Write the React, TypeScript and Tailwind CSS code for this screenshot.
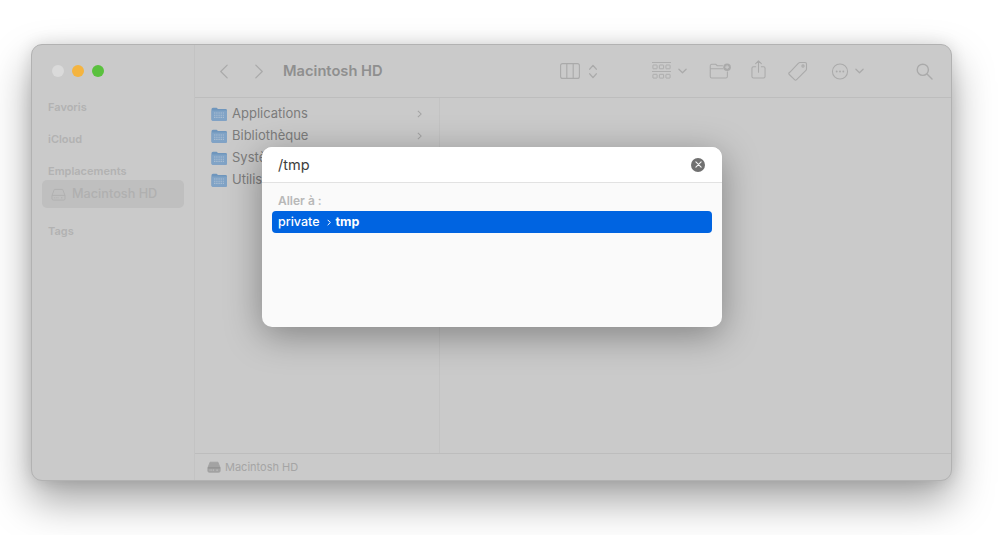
const font = "font-['Inter',_'Liberation_Sans',_sans-serif]";

function HardDisk({ className, filled }: { className?: string; filled?: boolean }) {
  return (
    <svg viewBox="0 0 16 14" className={className} fill="none" stroke="currentColor" strokeWidth="1">
      <path d="M3.5 1.500h9l2.500 6.500v3.500a1.500 1.500 0 0 1-1.500 1.500h-11A1.500 1.500 0 0 1 1 11.500V8z" fill={filled ? "#a3a3a3" : "none"} />
      <path d="M1 8h14" stroke={filled ? "#8a8a8a" : "currentColor"} />
      <circle cx="11.500" cy="10.500" r=".7" fill={filled ? "#d0d0d0" : "currentColor"} stroke="none" />
      <path d="M3 10.500h5" strokeDasharray="1 1" stroke={filled ? "#d0d0d0" : "currentColor"} />
    </svg>
  );
}

function FolderIcon() {
  return (
    <svg viewBox="0 0 16 14" className="h-[14px] w-[16px] shrink-0">
      <path d="M.5 2.200A1.500 1.500 0 0 1 2 .7h3.600l1.400 1.200h7.400A1.500 1.500 0 0 1 16 3.400v9a1.400 1.400 0 0 1-1.500 1.400H2A1.500 1.500 0 0 1 .5 12.400z" fill="#6f96bd" />
      <path d="M.5 3.600h15.500v8.800a1.400 1.400 0 0 1-1.500 1.400H2a1.500 1.500 0 0 1-1.500-1.400z" fill="#80a3c6" />
      <path d="M3 6h10M3 8.200h10M3 10.400h10" stroke="#a9bdd1" strokeWidth="1.100" strokeDasharray="1.400 .8" />
    </svg>
  );
}

function Toolbar() {
  return (
    <div className="flex h-[53px] shrink-0 items-center border-b border-[#bdbdbd] text-[#aaaaaa]">
      <svg viewBox="0 0 12 18" className="ml-[23px] h-[17px] w-[11px]" fill="none" stroke="currentColor" strokeWidth="1.400" strokeLinecap="round" strokeLinejoin="round">
        <path d="M10 2 3 9l7 7" />
      </svg>
      <svg viewBox="0 0 12 18" className="ml-[25px] h-[17px] w-[11px]" fill="none" stroke="currentColor" strokeWidth="1.400" strokeLinecap="round" strokeLinejoin="round">
        <path d="m2 2 7 7-7 7" />
      </svg>
      <span className="ml-[18px] w-[277px] text-[14.700px] leading-none font-semibold text-[#8f8f8f]">Macintosh HD</span>
      <svg viewBox="0 0 20 16" className="h-[16px] w-[20px]" fill="none" stroke="currentColor" strokeWidth="1.100">
        <rect x=".6" y=".6" width="18.800" height="14.800" rx="2" />
        <path d="M6.800.6v14.800M13.200.6v14.800" />
      </svg>
      <svg viewBox="0 0 10 16" className="ml-[8px] h-[15px] w-[10px]" fill="none" stroke="currentColor" strokeWidth="1.500" strokeLinecap="round" strokeLinejoin="round">
        <path d="m1.500 5.500 3.500-4 3.500 4M1.500 10.500l3.500 4 3.500-4" />
      </svg>
      <svg viewBox="0 0 19 17" className="ml-[54px] h-[17px] w-[19px] -translate-y-[1px]" fill="none" stroke="currentColor" strokeWidth=".9">
        <path d="M0 .5h19M0 9.500h19" />
        <rect x=".9" y="3" width="4.200" height="3.800" rx=".5" />
        <rect x="7.400" y="3" width="4.200" height="3.800" rx=".5" />
        <rect x="13.900" y="3" width="4.200" height="3.800" rx=".5" />
        <rect x=".9" y="12.300" width="4.200" height="3.800" rx=".5" />
        <rect x="7.400" y="12.300" width="4.200" height="3.800" rx=".5" />
        <rect x="13.900" y="12.300" width="4.200" height="3.800" rx=".5" />
      </svg>
      <svg viewBox="0 0 10 6" className="ml-[7px] h-[6px] w-[9px]" fill="none" stroke="currentColor" strokeWidth="1.400" strokeLinecap="round" strokeLinejoin="round">
        <path d="m1 1 4 4 4-4" />
      </svg>
      <svg viewBox="0 0 23 17" className="ml-[22px] h-[16px] w-[23px]" fill="none" stroke="currentColor" strokeWidth="1.100">
        <path d="M.6 3A1.600 1.600 0 0 1 2.200 1.400h4.300l1.500 1.500h6M.6 6h14M.6 3v11.400A1.600 1.600 0 0 0 2.200 16h15a1.600 1.600 0 0 0 1.600-1.600V9" />
        <circle cx="18.500" cy="4.400" r="4" fill="currentColor" stroke="none" />
        <path d="M18.500 2.400v4M16.500 4.400h4" stroke="#c9c9c9" strokeWidth="1.100" />
      </svg>
      <svg viewBox="0 0 15 20" className="ml-[19px] h-[19px] w-[15px] -translate-y-[2px]" fill="none" stroke="currentColor" strokeWidth="1.100" strokeLinecap="round" strokeLinejoin="round">
        <path d="M4.500 7H2.200A1.600 1.600 0 0 0 .6 8.600v8.800A1.600 1.600 0 0 0 2.200 19h10.600a1.600 1.600 0 0 0 1.600-1.600V8.600A1.600 1.600 0 0 0 12.800 7h-2.300M7.500 13V1M4.500 3.800 7.500.9l3 2.900" />
      </svg>
      <svg viewBox="0 0 20 20" className="ml-[22px] h-[20px] w-[20px]" fill="none" stroke="currentColor" strokeWidth="1.100" strokeLinejoin="round">
        <path d="M1.300 11.800 10.500 2.200A2 2 0 0 1 12 1.500h5a1.500 1.500 0 0 1 1.500 1.500v5a2 2 0 0 1-.6 1.400l-9.300 9.300a1.500 1.500 0 0 1-2.100 0l-5.200-5.200a1.500 1.500 0 0 1 0-2.100z" />
        <circle cx="15" cy="5" r="1.100" />
      </svg>
      <svg viewBox="0 0 18 18" className="ml-[23px] h-[17px] w-[18px]" fill="none" stroke="currentColor" strokeWidth="1.100">
        <circle cx="9" cy="9" r="8" />
        <circle cx="5.500" cy="9" r="1" fill="currentColor" stroke="none" />
        <circle cx="9" cy="9" r="1" fill="currentColor" stroke="none" />
        <circle cx="12.500" cy="9" r="1" fill="currentColor" stroke="none" />
      </svg>
      <svg viewBox="0 0 10 6" className="ml-[6px] h-[6px] w-[9px]" fill="none" stroke="currentColor" strokeWidth="1.400" strokeLinecap="round" strokeLinejoin="round">
        <path d="m1 1 4 4 4-4" />
      </svg>
      <svg viewBox="0 0 17 17" className="ml-[52px] h-[17px] w-[17px]" fill="none" stroke="currentColor" strokeWidth="1.400" strokeLinecap="round">
        <circle cx="6.800" cy="6.800" r="5.600" />
        <path d="m11 11 5 5" />
      </svg>
    </div>
  );
}

function Sidebar() {
  const heading = "px-[16px] text-[11px] leading-[13px] font-semibold text-[#b2b2b2]";
  return (
    <aside className="flex w-[163px] shrink-0 flex-col border-r border-[#c3c3c3]">
      <div className="mt-[20px] ml-[20px] flex gap-[8px]">
        <span className="h-[12px] w-[12px] rounded-full bg-[#dadada]" />
        <span className="h-[12px] w-[12px] rounded-full bg-[#f4b440]" />
        <span className="h-[12px] w-[12px] rounded-full bg-[#5ac13e]" />
      </div>
      <p className={`${heading} mt-[24px]`}>Favoris</p>
      <p className={`${heading} mt-[19px]`}>iCloud</p>
      <p className={`${heading} mt-[19px]`}>Emplacements</p>
      <div className="mx-[10px] mt-[2px] flex h-[28px] items-center rounded-[5px] bg-[#bfbfbf] px-[9px] text-[#b0b0b0]">
        <HardDisk className="h-[13px] w-[15px]" />
        <span className="ml-[6px] text-[12.700px] font-medium">Macintosh HD</span>
      </div>
      <p className={`${heading} mt-[17px]`}>Tags</p>
    </aside>
  );
}

function FileColumn() {
  const rows = ["Applications", "Bibliothèque", "Système", "Utilisateurs"];
  return (
    <div className="w-[245px] shrink-0 border-r border-[#c3c3c3] px-[16px] pt-[5px]">
      {rows.map((name, i) => (
        <div key={name} className="flex h-[22px] items-center gap-[5px]">
          <FolderIcon />
          <span className="text-[13px] text-[#7c7c7c]">{name}</span>
          {i < 2 && (
            <svg viewBox="0 0 6 10" className="mr-[1px] ml-auto h-[8px] w-[5px]" fill="none" stroke="#a3a3a3" strokeWidth="1.300">
              <path d="m1 1 4 4-4 4" />
            </svg>
          )}
        </div>
      ))}
    </div>
  );
}

function GoToDialog() {
  return (
    <div className="absolute top-[102px] left-[230px] h-[180px] w-[460px] overflow-hidden rounded-[10px] bg-[#fafafa] shadow-[0_8px_36px_rgba(0,0,0,0.36)]">
      <div className="flex h-[36px] items-center justify-between border-b border-[#e2e2e2] bg-white pr-[17px] pl-[16px]">
        <span className="text-[14.500px] text-[#3d3d3d]">/tmp</span>
        <span className="flex h-[14px] w-[14px] items-center justify-center rounded-full bg-[#707070]">
          <svg viewBox="0 0 8 8" className="h-[7px] w-[7px]" fill="none" stroke="#f2f2f2" strokeWidth="1.300" strokeLinecap="round">
            <path d="m1 1 6 6M7 1 1 7" />
          </svg>
        </span>
      </div>
      <p className="mt-[10px] px-[16px] text-[12px] leading-[15px] font-semibold text-[#b8b8b8]">Aller à :</p>
      <div className="mx-[10px] mt-[3px] flex h-[22px] items-center rounded-[4px] bg-[#0064e1] px-[6px] text-[12.500px] text-white">
        <span className="font-medium">private</span>
        <svg viewBox="0 0 6 10" className="mr-[5px] ml-[7px] h-[7px] w-[4px]" fill="none" stroke="#fff" strokeWidth="1.500">
          <path d="m1 1 4 4-4 4" />
        </svg>
        <span className="font-bold">tmp</span>
      </div>
    </div>
  );
}

export default function App() {
  return (
    <div className={`${font} h-[535px] w-[1007px] overflow-hidden bg-white pt-[44px] pl-[31px]`}>
      <div className="relative flex h-[437px] w-[921px] rounded-[11px] border border-[#b2b2b2] bg-[#cacaca] shadow-[0_20px_42px_rgba(0,0,0,0.36),0_0_16px_rgba(0,0,0,0.12)]">
        <Sidebar />
        <main className="flex min-w-0 flex-1 flex-col">
          <Toolbar />
          <div className="flex min-h-0 flex-1">
            <FileColumn />
          </div>
          <div className="flex h-[27px] shrink-0 items-center gap-[4px] border-t border-[#bdbdbd] pl-[12px] text-[#a2a2a2]">
            <HardDisk className="h-[14px] w-[14px]" filled />
            <span className="text-[11px] text-[#a5a5a5]">Macintosh HD</span>
          </div>
        </main>
        <GoToDialog />
      </div>
    </div>
  );
}
